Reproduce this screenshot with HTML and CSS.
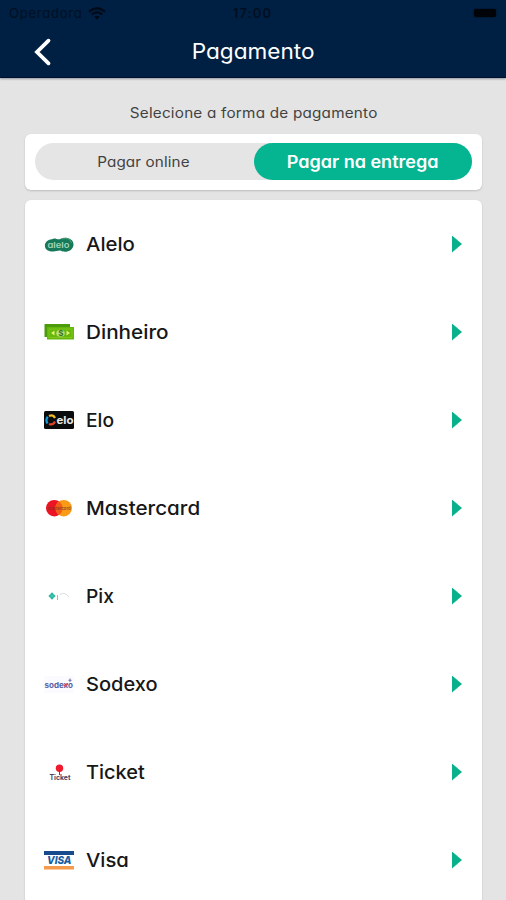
FILE: index.html
```html
<!DOCTYPE html>
<html lang="pt-BR">
<head>
<meta charset="utf-8">
<title>Pagamento</title>
<link rel="stylesheet" href="styles.css">
</head>
<body>
<header class="header">
  <div class="status">
    <div class="carrier"><span>Operadora</span>
      <svg width="18" height="13" viewBox="0 0 18 13"><path d="M1 4.6Q9-2.2 17 4.6M3.8 7.5Q9 3 14.2 7.5" fill="none" stroke="#000a18" stroke-width="2.3"/><path d="M6.2 9.8Q9 7.5 11.8 9.8L9 12.8Z" fill="#000a18"/></svg>
    </div>
    <time class="clock">17:00</time>
    <div class="power"><i class="battery"></i></div>
  </div>
  <nav class="nav">
    <svg class="back" width="18" height="28" viewBox="0 0 18 28"><path d="M14.5 2.7L3 14l11.5 11.3" fill="none" stroke="#fff" stroke-width="3.8" stroke-linecap="round"/></svg>
    <h1><span>Pagamento</span></h1>
  </nav>
</header>
<main>
  <p class="hint"><span>Selecione a forma de pagamento</span></p>
  <section class="card switch-card">
    <div class="switch">
      <button class="option"><span class="online">Pagar online</span></button>
      <button class="option active"><span class="delivery">Pagar na entrega</span></button>
    </div>
  </section>
  <ul class="card methods">
    <li><svg class="logo" viewBox="0 0 30 20"><path d="M8 5.2C11 3.5 13 6 16 5.2C20 2.2 29.5 3.5 29.5 10.5C29.5 17 21 19.5 16.5 16.6C13 16.5 11 18 8 17.4C-1 18-2 6 8 5.2Z" fill="#16795a"/><text x="3.5" y="13.6" font-size="8" font-weight="600" textLength="22" lengthAdjust="spacingAndGlyphs" fill="#a5d5b8">alelo</text><path d="M18 5Q26 3 27.5 9" stroke="#47a477" fill="none"/></svg><span class="name alelo">Alelo</span><i class="arrow"></i></li>
    <li><svg class="logo" viewBox="0 0 30 20"><path d="M.5 2H26v13H.5z" fill="#4b9b0b"/><path d="M3 5H30v12.5H3z" fill="#65b80b"/><path d="M5 7H28v8.5H5z" fill="none" stroke="#7fc51a"/><path d="M7 11l3.5-2.5v5zM26 11l-3.5-2.5v5z" fill="#e1ef73"/><ellipse cx="16.5" cy="11.2" rx="4.2" ry="3.5" fill="#b9df83"/><text x="14.2" y="14" font-size="8" font-weight="700" fill="#34791a">$</text></svg><span class="name dinheiro">Dinheiro</span><i class="arrow"></i></li>
    <li><svg class="logo" viewBox="0 0 30 20"><rect y="1" width="30" height="18" rx="1.5" fill="#090b0d"/><g fill="none" stroke-width="2.2"><path d="M3.5 13.5Q1.2 10 3.8 6.8" stroke="#169bd7"/><path d="M5 6Q9 4 11 8" stroke="#f4bb26"/><path d="M11 11.5Q9 15.5 5 14" stroke="#e54225"/></g><text x="12.5" y="14" font-size="11" font-weight="700" textLength="17" lengthAdjust="spacingAndGlyphs" fill="#e8e8e8">elo</text></svg><span class="name elo">Elo</span><i class="arrow"></i></li>
    <li><svg class="logo" viewBox="0 0 30 20"><circle cx="10.3" cy="10.2" r="8.3" fill="#ec1424"/><circle cx="19.7" cy="10.2" r="8.3" fill="#fa9b18"/><path d="M15 3.4a8.3 8.3 0 0 1 0 13.6a8.3 8.3 0 0 1 0-13.6" fill="#ef5d17"/><text x="3.5" y="11.8" font-size="4.5" font-weight="600" textLength="23" lengthAdjust="spacingAndGlyphs" fill="#7b3520" opacity=".8">mastercard</text></svg><span class="name mastercard">Mastercard</span><i class="arrow"></i></li>
    <li><svg class="logo" viewBox="0 0 30 20"><path d="M8 6.2L11.6 10 8 13.8 4.4 10Z" fill="#27b7a1"/><path d="M6 8l4 4M10 8l-4 4" stroke="#6ecbbd" stroke-width=".6"/><path d="M13.5 9v5" stroke="#b0b6b6"/><path d="M16 8.5Q21 5.5 25 11" stroke="#dcdfdf" fill="none"/></svg><span class="name pix">Pix</span><i class="arrow"></i></li>
    <li><svg class="logo" viewBox="0 0 30 20"><rect y="2" width="30" height="17" fill="#fafaff"/><text x=".5" y="13.8" font-size="7.8" font-weight="700" textLength="28.5" lengthAdjust="spacingAndGlyphs" fill="#5660a3">sodexo</text><path d="M20 12l4-2" stroke="#e5484f" stroke-width="1.5"/><path d="M26 4.5v3.5M24.5 6.3h3" stroke="#6370ad"/></svg><span class="name sodexo">Sodexo</span><i class="arrow"></i></li>
    <li><svg class="logo" viewBox="0 0 30 20"><circle cx="15.5" cy="6.3" r="3.7" fill="#ee1b2d"/><path d="M15.5 8v5" stroke="#9d3048"/><text x="5.5" y="18.2" font-size="7" font-weight="700" textLength="21" lengthAdjust="spacingAndGlyphs" fill="#454466">Ticket</text></svg><span class="name ticket">Ticket</span><i class="arrow"></i></li>
    <li><svg class="logo" viewBox="0 0 30 20"><path d="M0 1h30v4H0z" fill="#164b8d"/><path d="M0 16h30v3.5H0z" fill="#f69b4b"/><text x="3" y="14.4" font-size="10.8" font-weight="800" font-style="italic" textLength="24.5" lengthAdjust="spacingAndGlyphs" fill="#175ca0">VISA</text></svg><span class="name visa">Visa</span><i class="arrow"></i></li>
  </ul>
</main>
</body>
</html>
```
FILE: styles.css
```css
* { box-sizing: border-box; }
body {
  margin: 0;
  height: 900px;
  overflow: hidden;
  background: #e4e4e4;
  color: #171717;
  font-family: Inter, "Liberation Sans", sans-serif;
  font-feature-settings: "cv11";
}
.header {
  height: 78px;
  background: #002043;
  border-bottom: 1px solid #00102f;
  box-shadow: 0 1px 2px #9296a0;
}
.status {
  display: grid;
  grid-template-columns: 1fr auto 1fr;
  align-items: center;
  height: 26px;
  padding: 0 10px 0 9px;
  color: #000f22;
}
.carrier { display: flex; align-items: center; gap: 5px; font-size: 13px; letter-spacing: .78px; }
.clock { font-size: 13px; font-weight: 600; letter-spacing: 1.1px; }
.power { display: flex; justify-content: flex-end; }
.battery { width: 22px; height: 8px; border-radius: 2px; background: #000308; box-shadow: 0 0 2px #000b18; }
.nav { display: grid; grid-template-columns: 60px 1fr 60px; align-items: center; height: 52px; }
.back { margin-left: 34px; }
h1 { margin: 0; text-align: center; color: #fff; font-size: 21px; line-height: 28px; font-weight: 400; }
h1 span, .hint span, .option span { display: inline-block; }
h1 span { transform: scaleX(1.075); }
main { padding: 0 24px 0 25px; }
.hint { margin: 0; height: 56px; padding-top: 25px; text-align: center; color: #424242; font-size: 14px; line-height: 20px; }
.hint span { letter-spacing: .2px; transform: scaleX(1.09); }
.card { border-radius: 6px; background: #fff; box-shadow: 0 1px 2px #bcbcbc; }
.switch-card { height: 56px; padding: 9px 10px; }
.switch { display: flex; height: 37px; border-radius: 19px; background: #e5e5e5; }
.option { flex: 1; border: 0; border-radius: 19px; padding: 0 0 1px; background: none; color: #424242; font: 400 14px Inter, sans-serif; font-feature-settings: "cv11"; }
.online { letter-spacing: .1px; transform: translateX(-1px) scaleX(1.09); }
.active { background: #05b491; color: #fff; font-size: 17px; font-weight: 600; }
.delivery { transform: translateY(1px) scaleX(1.06); }
.methods { list-style: none; margin: 10px 0 0; padding: 0 20px 0 19px; }
.methods li { display: flex; align-items: center; height: 88px; }
.logo { width: 30px; height: 20px; margin-right: 12px; }
.name { margin-right: auto; font-size: 19px; font-weight: 550; transform-origin: left; }
.alelo { transform: scaleX(1.07); }
.dinheiro { transform: scaleX(1.09); }
.elo { transform: scaleX(1.01); }
.mastercard { transform: scaleX(1.085); }
.pix { transform: scaleX(1.01); }
.sodexo { transform: scaleX(1.055); }
.ticket { transform: scaleX(1.05); }
.visa { transform: scaleX(1.065); }
.arrow { width: 10px; height: 17px; background: #08b18b; clip-path: polygon(0 0, 100% 50%, 0 100%); }
```
